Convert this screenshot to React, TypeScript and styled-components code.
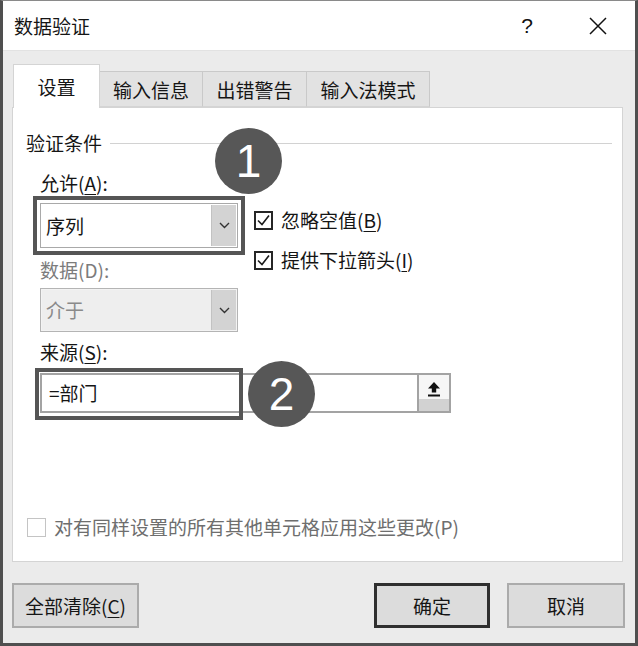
import React from 'react';
import styled, { createGlobalStyle } from 'styled-components';

const Global = createGlobalStyle`
  html, body { margin: 0; padding: 0; background: #fff; }
  body { font-family: "Noto Sans CJK SC", "Noto Sans", sans-serif; }
  * { box-sizing: border-box; }
`;

const Dialog = styled.div`
  position: relative;
  width: 638px;
  height: 646px;
  background: #ebebeb;
  border: 3px solid #4f4f4f;
  border-top: 1px solid #8a8a8a;
  display: flex;
  flex-direction: column;
  color: #151515;
  font-size: 19px;
  overflow: hidden;
`;

const TitleBar = styled.div`
  height: 50px;
  flex: none;
  background: #fff;
  display: flex;
  align-items: center;
  padding-left: 11px;
  padding-right: 17px;
  border-bottom: 1px solid #e2e2e2;
`;

const Title = styled.div`
  flex: 1;
  font-size: 19px;
  line-height: 26px;
`;

const TitleButton = styled.div`
  width: 40px;
  height: 40px;
  display: flex;
  align-items: center;
  justify-content: center;
  font-family: "Liberation Sans", Arial, sans-serif;
  font-size: 21px;
  color: #111;
  & + & { margin-left: 31px; }
`;

const TabRow = styled.div`
  height: 56px;
  flex: none;
  display: flex;
  align-items: flex-end;
  padding-left: 10px;
`;

const Tab = styled.div<{ $active?: boolean; $w: number }>`
  width: ${p => p.$w}px;
  height: ${p => (p.$active ? 44 : 36)}px;
  margin-bottom: ${p => (p.$active ? -1 : 0)}px;
  margin-left: ${p => (p.$active ? 0 : -1)}px;
  position: relative;
  z-index: ${p => (p.$active ? 2 : 1)};
  background: ${p => (p.$active ? '#fff' : '#e2e2e2')};
  border: 1px solid ${p => (p.$active ? '#d4d4d4' : '#c9c9c9')};
  border-bottom: ${p => (p.$active ? 'none' : '1px solid #d4d4d4')};
  display: flex;
  align-items: center;
  justify-content: center;
  font-size: 19px;
  line-height: 26px;
  padding-top: ${p => (p.$active ? 0 : 2)}px;
  &:first-child { margin-left: 0; }
`;

const Panel = styled.div`
  height: 455px;
  flex: none;
  margin: 0 12px 0 9px;
  background: #fff;
  border: 1px solid #d4d4d4;
  display: flex;
  flex-direction: column;
  padding: 22px 10px 24px 13px;
`;

const GroupHeader = styled.div`
  display: flex;
  align-items: center;
  height: 26px;
  line-height: 26px;
  &::after {
    content: '';
    flex: 1;
    height: 1px;
    background: #d2d2d2;
    margin-left: 8px;
  }
`;

const FormArea = styled.div`
  padding-left: 14px;
  display: flex;
  flex-direction: column;
`;

const TopGrid = styled.div`
  display: grid;
  grid-template-columns: 198px auto;
  column-gap: 16px;
`;

const Column = styled.div<{ $top?: number; $gap?: number }>`
  display: flex;
  flex-direction: column;
  margin-top: ${p => p.$top ?? 0}px;
  gap: ${p => p.$gap ?? 0}px;
`;

const FieldLabel = styled.div<{ $top: number; $disabled?: boolean }>`
  height: 26px;
  line-height: 26px;
  margin-top: ${p => p.$top}px;
  color: ${p => (p.$disabled ? '#7c7c7c' : '#151515')};
  u { text-underline-offset: 3px; text-decoration-thickness: 1px; }
`;

const Select = styled.div<{ $top: number; $h: number; $disabled?: boolean; $highlight?: boolean }>`
  margin-top: ${p => p.$top}px;
  height: ${p => p.$h}px;
  display: flex;
  border: 1px solid ${p => (p.$disabled ? '#b4b4b4' : '#a9a9a9')};
  background: ${p => (p.$disabled ? '#eeeeee' : '#fff')};
  box-shadow: inset 0 0 0 1px ${p => (p.$disabled ? '#f3f3f3' : '#fff')};
  outline: ${p => (p.$highlight ? '4px solid #555' : 'none')};
  outline-offset: 3px;
`;

const SelectValue = styled.div<{ $disabled?: boolean }>`
  flex: 1;
  display: flex;
  align-items: center;
  padding-left: 5px;
  color: ${p => (p.$disabled ? '#8a8a8a' : '#151515')};
  line-height: 26px;
`;

const SelectButton = styled.div`
  width: 25px;
  margin: 1px;
  background: #d3d3d3;
  border-left: 1px solid #c2c2c2;
  display: flex;
  align-items: center;
  justify-content: center;
`;

const CheckRow = styled.label<{ $disabled?: boolean }>`
  display: flex;
  align-items: center;
  height: 20px;
  gap: 8px;
  color: ${p => (p.$disabled ? '#6e6e6e' : '#151515')};
  line-height: 26px;
  u { text-underline-offset: 3px; text-decoration-thickness: 1px; }
`;

const CheckText = styled.span`
  white-space: nowrap;
`;

const Box = styled.span<{ $disabled?: boolean }>`
  width: 19px;
  height: 19px;
  flex: none;
  border: ${p => (p.$disabled ? '1px solid #c4c4c4' : '2px solid #262626')};
  background: #fff;
  display: flex;
  align-items: center;
  justify-content: center;
`;

const SourceWrap = styled.div`
  position: relative;
  margin-top: 8px;
  width: 411px;
  height: 40px;
`;

const SourceInput = styled.div`
  height: 100%;
  display: flex;
  border: 2px solid #a3a3a3;
  background: #fff;
`;

const SourceText = styled.div`
  flex: 1;
  display: flex;
  align-items: center;
  padding-left: 7px;
  line-height: 26px;
`;

const RefButton = styled.div`
  width: 32px;
  border-left: 2px solid #a3a3a3;
  background: linear-gradient(#f6f6f6 0 66%, #d2d2d2 66%);
  display: flex;
  justify-content: center;
  padding-top: 6px;
`;

const Callout = styled.div`
  position: absolute;
  left: -5px;
  top: -5px;
  width: 208px;
  height: 52px;
  border: 4px solid #555;
  pointer-events: none;
`;

const BottomCheck = styled.div`
  margin-top: auto;
  padding-left: 1px;
`;

const Footer = styled.div`
  flex: 1;
  display: flex;
  align-items: flex-start;
  padding: 21px 10px 0 9px;
`;

const Button = styled.div<{ $w: number; $default?: boolean }>`
  width: ${p => p.$w}px;
  height: 45px;
  background: #dcdcdc;
  border: ${p => (p.$default ? '3px solid #2f2f2f' : '2px solid #ababab')};
  display: flex;
  align-items: center;
  justify-content: center;
  font-size: 19px;
  line-height: 26px;
  u { text-underline-offset: 3px; text-decoration-thickness: 1px; }
`;

const Spacer = styled.div`
  flex: 1;
`;

const ButtonGap = styled.div`
  width: 17px;
`;

const Badge = styled.div<{ $x: number; $y: number }>`
  position: absolute;
  left: ${p => p.$x}px;
  top: ${p => p.$y}px;
  width: 67px;
  height: 66px;
  border-radius: 50%;
  background: #575757;
  color: #fff;
  display: flex;
  align-items: center;
  justify-content: center;
  font-family: "Liberation Sans", Arial, sans-serif;
  font-size: 46px;
  line-height: 1;
  z-index: 5;
`;

const Chevron = () => (
  <svg width="11" height="7" viewBox="0 0 11 7">
    <path d="M1 1 L5.5 5.5 L10 1" fill="none" stroke="#333" strokeWidth="1.4" />
  </svg>
);

const Check = () => (
  <svg width="15" height="15" viewBox="0 0 15 15">
    <path d="M2 7.5 L6 11.5 L13 2.5" fill="none" stroke="#1a1a1a" strokeWidth="1.6" />
  </svg>
);

const UploadIcon = () => (
  <svg width="14" height="16" viewBox="0 0 14 16">
    <path d="M7 1 L13 7.5 H9.2 V11.5 H4.8 V7.5 H1 Z" fill="#111" />
    <rect x="1" y="13.5" width="12" height="2" fill="#111" />
  </svg>
);

const CloseIcon = () => (
  <svg width="18" height="18" viewBox="0 0 18 18">
    <path d="M1 1 L17 17 M17 1 L1 17" stroke="#111" strokeWidth="1.5" />
  </svg>
);

export default function App() {
  return (
    <>
      <Global />
      <Dialog>
        <TitleBar>
          <Title>数据验证</Title>
          <TitleButton>?</TitleButton>
          <TitleButton>
            <CloseIcon />
          </TitleButton>
        </TitleBar>

        <TabRow>
          <Tab $active $w={87}>设置</Tab>
          <Tab $w={104}>输入信息</Tab>
          <Tab $w={105}>出错警告</Tab>
          <Tab $w={124}>输入法模式</Tab>
        </TabRow>

        <Panel>
          <GroupHeader>验证条件</GroupHeader>
          <FormArea>
            <TopGrid>
              <Column>
                <FieldLabel $top={14}>
                  允许(<u>A</u>):
                </FieldLabel>
                <Select $top={7} $h={45} $highlight>
                  <SelectValue>序列</SelectValue>
                  <SelectButton>
                    <Chevron />
                  </SelectButton>
                </Select>
                <FieldLabel $top={9} $disabled>
                  数据(D):
                </FieldLabel>
                <Select $top={5} $h={44} $disabled>
                  <SelectValue $disabled>介于</SelectValue>
                  <SelectButton>
                    <Chevron />
                  </SelectButton>
                </Select>
              </Column>
              <Column $top={54} $gap={20}>
                <CheckRow>
                  <Box>
                    <Check />
                  </Box>
                  <CheckText>
                    忽略空值(<u>B</u>)
                  </CheckText>
                </CheckRow>
                <CheckRow>
                  <Box>
                    <Check />
                  </Box>
                  <CheckText>
                    提供下拉箭头(<u>I</u>)
                  </CheckText>
                </CheckRow>
              </Column>
            </TopGrid>
            <FieldLabel $top={7}>
              来源(<u>S</u>):
            </FieldLabel>
            <SourceWrap>
              <SourceInput>
                <SourceText>=部门</SourceText>
                <RefButton>
                  <UploadIcon />
                </RefButton>
              </SourceInput>
              <Callout />
            </SourceWrap>
          </FormArea>
          <BottomCheck>
            <CheckRow $disabled>
              <Box $disabled />
              <CheckText>对有同样设置的所有其他单元格应用这些更改(P)</CheckText>
            </CheckRow>
          </BottomCheck>
        </Panel>

        <Footer>
          <Button $w={127}>
            <span>
              全部清除(<u>C</u>)
            </span>
          </Button>
          <Spacer />
          <Button $w={116} $default>确定</Button>
          <ButtonGap />
          <Button $w={118}>取消</Button>
        </Footer>

        <Badge $x={212} $y={127}>1</Badge>
        <Badge $x={245} $y={360}>2</Badge>
      </Dialog>
    </>
  );
}
